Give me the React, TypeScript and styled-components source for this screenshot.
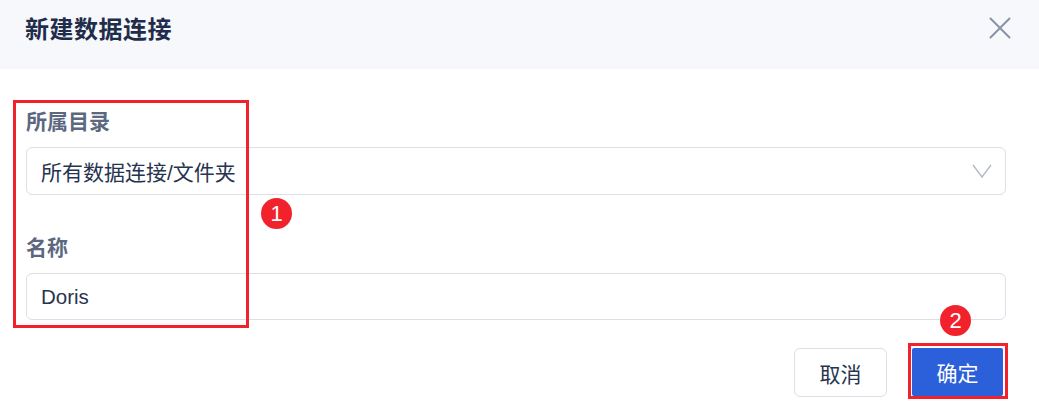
import styled, { createGlobalStyle } from 'styled-components';

const GlobalStyle = createGlobalStyle`
  html, body {
    margin: 0;
    padding: 0;
    background: #ffffff;
  }
  body {
    font-family: "Liberation Sans", "Noto Sans CJK SC", sans-serif;
  }
`

const FONT = `"Liberation Sans", "Noto Sans CJK SC", sans-serif`

export default function App() {
  return (
    <>
      <GlobalStyle />
      <Dialog>
        <Header>
          <Title>新建数据连接</Title>
          <CloseButton aria-label="close">
            <svg width="22" height="22" viewBox="0 0 22 22">
              <path d="M1.5 1.5 L20.5 20.5 M20.5 1.5 L1.5 20.5" stroke="#8a93a5" strokeWidth="2" strokeLinecap="round" fill="none" />
            </svg>
          </CloseButton>
        </Header>

        <Body>
          <Field>
            <Label>所属目录</Label>
            <Select>
              <span>所有数据连接/文件夹</span>
              <svg width="20" height="16" viewBox="0 0 20 16">
                <path d="M1 2 L10 14 L19 2" stroke="#b3bac8" strokeWidth="1.4" fill="none" />
              </svg>
            </Select>
          </Field>
          <Field>
            <Label>名称</Label>
            <Input>Doris</Input>
          </Field>
        </Body>

        <Footer>
          <Button>取消</Button>
          <Button primary>确定</Button>
        </Footer>

        {/* annotation marks over the form */}
        <Mark style={{ left: 13, top: 100, width: 236, height: 228 }} />
        <Mark style={{ left: 908, top: 343, width: 100, height: 56 }} />
        <Badge style={{ left: 261, top: 198 }}>1</Badge>
        <Badge style={{ left: 940, top: 305 }}>2</Badge>
      </Dialog>
    </>
  );
}

const Dialog = styled.div`
  position: relative;
  width: 1039px;
  height: 410px;
  background: #ffffff;
  overflow: hidden;
`

const Header = styled.div`
  height: 69px;
  background: #f6f8fc;
  display: flex;
  align-items: center;
  justify-content: space-between;
  padding: 0 28px 14px 25px;
  box-sizing: border-box;
`

const Title = styled.h2`
  margin: 0;
  font-family: ${FONT};
  font-size: 24px;
  font-weight: 700;
  color: #1f2d4b;
  letter-spacing: 0.5px;
`

const CloseButton = styled.div`
  display: flex;
  width: 22px;
  height: 22px;
`

const Body = styled.div`
  padding: 39px 33px 0 26px;
  display: flex;
  flex-direction: column;
  gap: 39px;
`

const Field = styled.div`
  display: flex;
  flex-direction: column;
  gap: 11px;
`

const Label = styled.div`
  font-family: ${FONT};
  font-size: 21px;
  line-height: 28px;
  font-weight: 700;
  color: #5c6880;
`

const Select = styled.div`
  height: 48px;
  box-sizing: border-box;
  border: 1px solid #dcdfe8;
  border-radius: 6px;
  display: flex;
  align-items: center;
  justify-content: space-between;
  padding: 0 13px 0 14px;
  font-family: ${FONT};
  font-size: 21px;
  color: #27344f;
`

const Input = styled(Select)`
  height: 47px;
  font-size: 20.5px;
`

const Footer = styled.div`
  display: flex;
  justify-content: flex-end;
  gap: 25px;
  padding: 28px 36px 0 0;
`

const Button = styled.div<{ primary?: boolean }>`
  height: ${p => (p.primary ? '48px' : '49px')};
  width: ${p => (p.primary ? '91px' : '93px')};
  box-sizing: border-box;
  display: flex;
  align-items: center;
  justify-content: center;
  font-family: ${FONT};
  font-size: 21px;
  border-radius: ${p => (p.primary ? '2px' : '6px')};
  border: ${p => (p.primary ? 'none' : '1px solid #dcdfe8')};
  background: ${p => (p.primary ? '#2c60da' : '#ffffff')};
  color: ${p => (p.primary ? '#ffffff' : '#27344f')};
`

const Mark = styled.div`
  position: absolute;
  box-sizing: border-box;
  border: 3px solid #f2222d;
`

const Badge = styled.div`
  position: absolute;
  width: 31px;
  height: 31px;
  border-radius: 50%;
  background: #f2222d;
  color: #ffffff;
  display: flex;
  align-items: center;
  justify-content: center;
  font-family: ${FONT};
  font-size: 22px;
  line-height: 1;
`
